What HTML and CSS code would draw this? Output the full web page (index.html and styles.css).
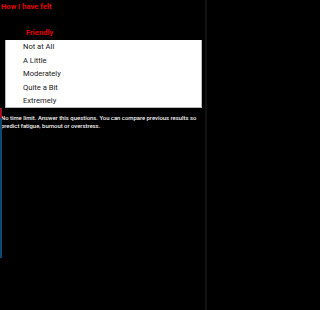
FILE: index.html
```html
<!DOCTYPE html>
<html>
<head>
<meta charset="utf-8">
<link rel="stylesheet" href="styles.css">
</head>
<body>
<div class="screen">
  <div class="title">How I have felt</div>
  <div class="subtitle">Friendly</div>
  <ul class="options">
    <li>Not at All</li>
    <li>A Little</li>
    <li>Moderately</li>
    <li>Quite a Bit</li>
    <li>Extremely</li>
  </ul>
  <p class="note">No time limit. Answer this questions. You can compare previous results so predict fatigue, burnout or overstress.</p>
  <div class="edge-left"><span class="edge-red"></span></div>
  <div class="edge-right"></div>
</div>
</body>
</html>
```
FILE: styles.css
```css
html, body {
  margin: 0;
  padding: 0;
  background: #000;
}
.screen {
  position: relative;
  width: 207px;
  height: 310px;
  overflow: hidden;
  font-family: Roboto, "Liberation Sans", sans-serif;
}
.title {
  color: #e00000;
  font-weight: bold;
  font-size: 7.6px;
  line-height: 10px;
  padding: 2px 0 0 1px;
}
.subtitle {
  color: #e00000;
  font-weight: bold;
  font-size: 7.6px;
  line-height: 10px;
  margin-top: 16px;
  padding-left: 26px;
}
.options {
  list-style: none;
  margin: 2px 5px 0 5px;
  padding: 0;
  background: #fff;
  border: 1px solid #b8b8b8;
  border-top: none;
  height: 68px;
  box-sizing: border-box;
}
.options li {
  height: 13.5px;
  line-height: 13.5px;
  padding-left: 17px;
  font-size: 7.6px;
  color: #222;
}
.note {
  margin: 6px 0 0 1px;
  color: #f2f2f2;
  font-size: 5.9px;
  line-height: 8px;
  font-weight: 500;
  width: 203px;
}
.edge-left {
  position: absolute;
  left: 0;
  top: 108px;
  width: 1.5px;
  height: 150px;
  background: #0b4a75;
}
.edge-red {
  display: block;
  width: 100%;
  height: 10px;
  background: #a01020;
}
.edge-right {
  position: absolute;
  right: 0;
  top: 0;
  width: 2px;
  height: 310px;
  background: #111;
}
```
